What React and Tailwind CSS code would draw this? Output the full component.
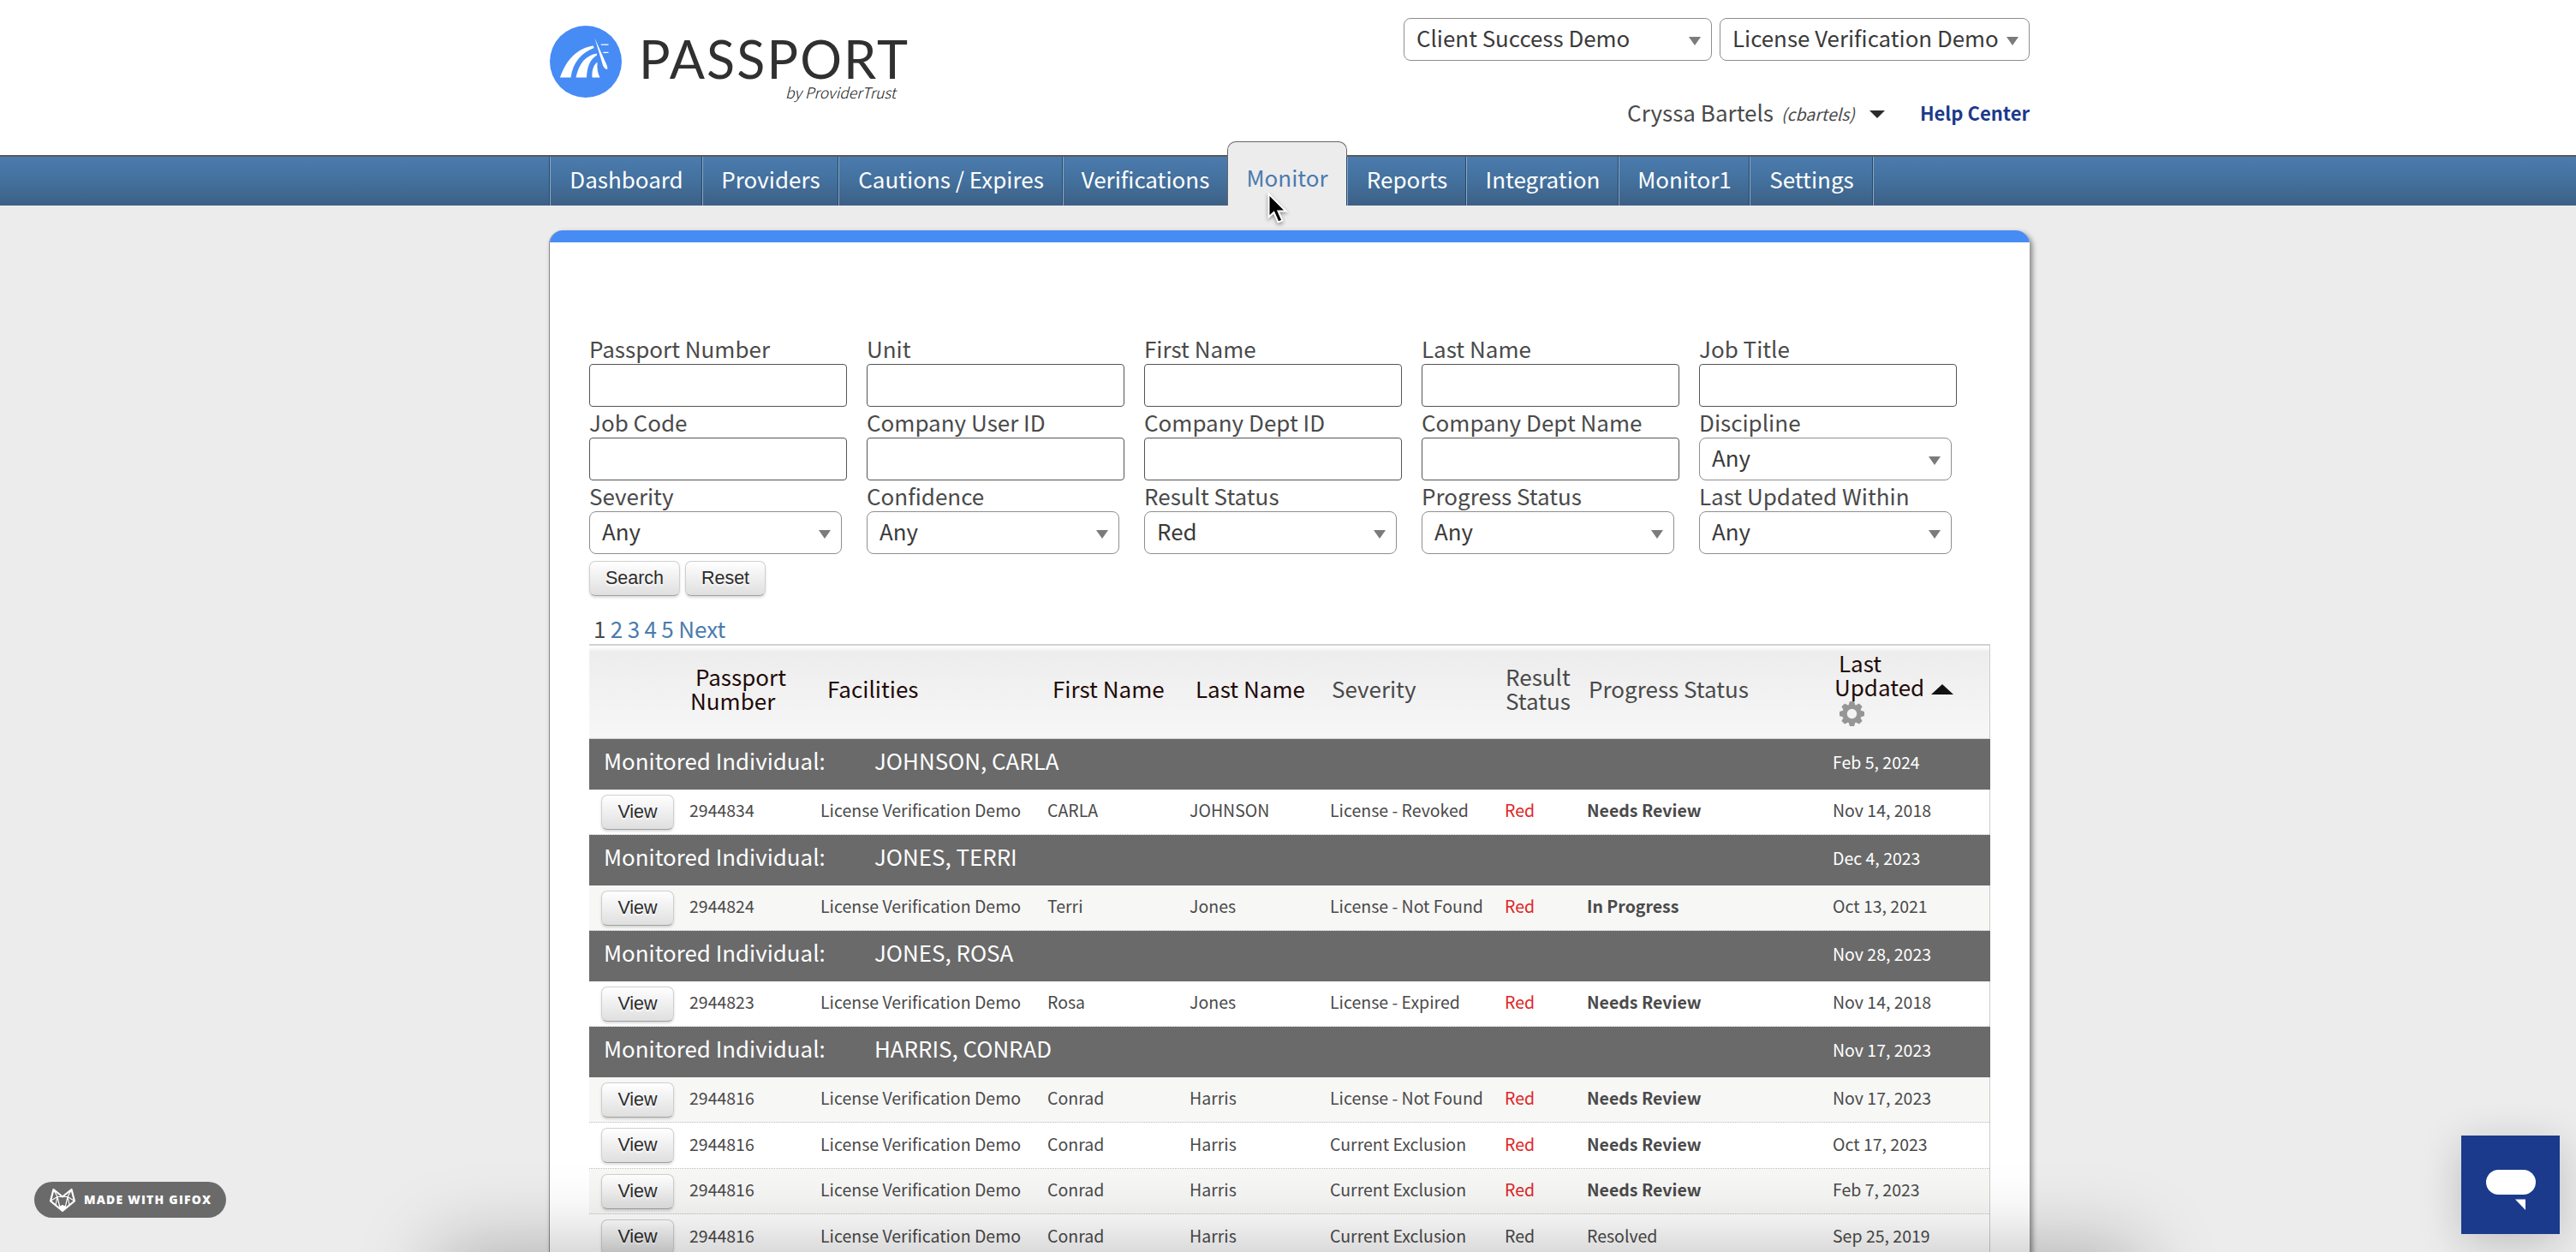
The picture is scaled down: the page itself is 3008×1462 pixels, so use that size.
const NAV = [
  { label: 'Dashboard', width: 'w-[178px]' },
  { label: 'Providers', width: 'w-[159px]' },
  { label: 'Cautions / Expires', width: 'w-[262px]' },
  { label: 'Verifications', width: 'w-[192px]' },
  { label: 'Monitor', width: 'w-[140px]', active: true },
  { label: 'Reports', width: 'w-[139px]' },
  { label: 'Integration', width: 'w-[178px]' },
  { label: 'Monitor1', width: 'w-[153px]' },
  { label: 'Settings', width: 'w-[144px]' },
]

const FILTERS = [
  { label: 'Passport Number' },
  { label: 'Unit' },
  { label: 'First Name' },
  { label: 'Last Name' },
  { label: 'Job Title' },
  { label: 'Job Code' },
  { label: 'Company User ID' },
  { label: 'Company Dept ID' },
  { label: 'Company Dept Name' },
  { label: 'Discipline', value: 'Any' },
  { label: 'Severity', value: 'Any' },
  { label: 'Confidence', value: 'Any' },
  { label: 'Result Status', value: 'Red' },
  { label: 'Progress Status', value: 'Any' },
  { label: 'Last Updated Within', value: 'Any' },
]

const GROUPS = [
  {
    name: 'JOHNSON, CARLA',
    date: 'Feb 5, 2024',
    rows: [
      { id: '2944834', first: 'CARLA', last: 'JOHNSON', severity: 'License - Revoked', result: 'Red', progress: 'Needs Review', date: 'Nov 14, 2018' },
    ],
  },
  {
    name: 'JONES, TERRI',
    date: 'Dec 4, 2023',
    rows: [
      { id: '2944824', first: 'Terri', last: 'Jones', severity: 'License - Not Found', result: 'Red', progress: 'In Progress', date: 'Oct 13, 2021', shaded: true },
    ],
  },
  {
    name: 'JONES, ROSA',
    date: 'Nov 28, 2023',
    rows: [
      { id: '2944823', first: 'Rosa', last: 'Jones', severity: 'License - Expired', result: 'Red', progress: 'Needs Review', date: 'Nov 14, 2018' },
    ],
  },
  {
    name: 'HARRIS, CONRAD',
    date: 'Nov 17, 2023',
    rows: [
      { id: '2944816', first: 'Conrad', last: 'Harris', severity: 'License - Not Found', result: 'Red', progress: 'Needs Review', date: 'Nov 17, 2023', shaded: true },
      { id: '2944816', first: 'Conrad', last: 'Harris', severity: 'Current Exclusion', result: 'Red', progress: 'Needs Review', date: 'Oct 17, 2023' },
      { id: '2944816', first: 'Conrad', last: 'Harris', severity: 'Current Exclusion', result: 'Red', progress: 'Needs Review', date: 'Feb 7, 2023', shaded: true },
      { id: '2944816', first: 'Conrad', last: 'Harris', severity: 'Current Exclusion', result: 'Red', progress: 'Resolved', date: 'Sep 25, 2019', resolved: true },
    ],
  },
]

const COLS = 'grid grid-cols-[113px_154px_264px_166px_165px_203px_97px_287px_186px]'

function Caret({ className }) {
  return (
    <svg viewBox="0 0 14 10" preserveAspectRatio="none" className={className}>
      <path d="M0 0H14L7 10Z" fill="currentColor" />
    </svg>
  )
}

function Select({ value, className }) {
  return (
    <div className={`flex h-[50px] items-center justify-between rounded-[8px] border border-[#8e8e8e] bg-white pl-[14px] pr-[12px] text-[#3a3a3a] ${className}`}>
      <span className="-mt-[5px] text-[25.9px] leading-[40px]">{value}</span>
      <Caret className="mt-[3px] h-[10px] w-[14px] text-[#7b7b7b]" />
    </div>
  )
}

function Button({ children, className }) {
  return (
    <button className={`flex h-[41px] items-center justify-center rounded-[7px] border border-[#cfcfcf] border-b-[#a0a0a0] bg-linear-to-b from-white to-[#dfdfdf] pb-px font-['Liberation_Sans',sans-serif] text-[21.5px] text-[#2c2c2c] shadow-[0_2px_3px_rgba(0,0,0,0.14)] [text-shadow:0_2px_2px_#fff] ${className}`}>
      {children}
    </button>
  )
}

function Logo() {
  return (
    <div className="flex pt-[30px]">
      <svg viewBox="0 0 84 84" className="h-[84px] w-[84px]">
        <circle cx="42" cy="42" r="42" fill="#478bf5" />
        <g fill="#fff">
          <path d="M12 60.500C19 40 32 26 51 23.500L51.500 26C38 31 27 42 24.500 60.500Z" />
          <path d="M30.500 60.500C34 44 42 34.500 55 32.500V34.500C47 39 43.500 48 43 60.500Z" />
          <path d="M49.500 60.500C49 52 51 46 55.500 42.500C55 50 56 56 58.500 60.500Z" />
          <path d="M52.500 14.500L66.500 46Q68.500 51 66 51Q63.500 50 62 46.500Z" />
          <path d="M59.500 21.500H68.500V22.800H60Z M62 30.800H68.500V32H62.500Z" />
        </g>
      </svg>
      <div className="ml-[20px] flex w-[320px] flex-col">
        <div className="mt-[9px] h-[60px] whitespace-nowrap font-['Lato',sans-serif] text-[61px] leading-[60px] tracking-[2.1px] text-[#303030]">PASSPORT</div>
        <div className="-mt-[4px] pr-[20px] text-right text-[17.5px] font-light italic leading-[26px] text-[#111]">by ProviderTrust</div>
      </div>
    </div>
  )
}

function Header() {
  return (
    <header className="flex h-[181px] items-start justify-between bg-white pl-[642px] pr-[638px]">
      <Logo />
      <div className="flex flex-col items-end pt-[21px]">
        <div className="flex gap-[9px]">
          <Select value="Client Success Demo" className="w-[360px]" />
          <Select value="License Verification Demo" className="w-[362px]" />
        </div>
        <div className="mt-[44px] flex items-baseline leading-[32px] text-[#4a4a4a]">
          <span>Cryssa Bartels</span>
          <span className="ml-[9px] -translate-y-px text-[19.5px] italic">(cbartels)</span>
          <Caret className="ml-[17px] h-[9px] w-[18px] -translate-y-1 text-[#2b2b2b]" />
          <span className="ml-[41px] -translate-y-px text-[22px] font-bold text-[#1b3a8c]">Help Center</span>
        </div>
      </div>
    </header>
  )
}

function Nav() {
  return (
    <nav className="flex h-[59px] items-end border-t-2 border-[#5a5a5a] bg-linear-to-b from-[#4b7bae] via-[#43709d] to-[#3d6085] pl-[642px] text-[26px]">
      {NAV.map(n =>
        n.active ? (
          <div key={n.label} className={`flex h-[75px] items-center justify-center rounded-t-[10px] border border-b-0 border-[#666] bg-[#ececec] pt-[6px] text-[#4a7bae] ${n.width}`}>
            {n.label}
          </div>
        ) : (
          <div key={n.label} className={`flex h-full items-center justify-center border-l border-[#8fa9c2] pb-[7px] text-white shadow-[-1px_0_0_#24486b] ${n.width}`}>
            {n.label}
          </div>
        )
      )}
      <div className="h-full border-l border-[#8fa9c2] shadow-[-1px_0_0_#24486b]" />
    </nav>
  )
}

function Filters() {
  return (
    <div className="grid grid-cols-[repeat(5,301px)] gap-x-[23px]">
      {FILTERS.map(f => (
        <div key={f.label} className="h-[86px]">
          <div className="h-8 leading-[28px]">{f.label}</div>
          {f.value ? (
            <Select value={f.value} className="w-[295px]" />
          ) : (
            <div className="h-[50px] rounded-[4px] border border-[#555] bg-white" />
          )}
        </div>
      ))}
    </div>
  )
}

function Gear() {
  return (
    <svg viewBox="-14 -14 28 28" className="h-[29px] w-[29px]">
      <g fill="#969696">
        {[0, 45, 90, 135].map(a => (
          <path key={a} d="M-4 -9L-2.500 -14H2.500L4 -9V9L2.500 14H-2.500L-4 9Z" transform={`rotate(${a})`} />
        ))}
        <circle r="10.500" />
      </g>
      <circle r="5.500" fill="#f3f3f3" />
    </svg>
  )
}

function TableHead() {
  return (
    <div className={`${COLS} h-[111px] items-center border-b border-t-2 border-[#d2d2d2] bg-linear-to-b from-[#ececec] to-[#f7f7f7] pb-[8px] leading-[28px] text-[#210a08] shadow-[inset_0_6px_4px_-2px_#fff]`}>
      <div />
      <div className="pl-[5px]"><div className="pl-[6px]">Passport</div>Number</div>
      <div className="pl-[11px]">Facilities</div>
      <div className="pl-[10px]">First Name</div>
      <div className="pl-[11px]">Last Name</div>
      <div className="pl-[5px] text-[#4a4a4a]">Severity</div>
      <div className="pl-[5px] text-[#4a4a4a]">Result<br />Status</div>
      <div className="pl-[5px] text-[#4a4a4a]">Progress Status</div>
      <div className="-mt-px pl-[5px]">
        <div className="pl-[5px]">Last</div>
        <div className="flex items-center">
          Updated
          <Caret className="ml-[8px] mt-[6px] h-[12px] w-[26px] rotate-180 text-[#111]" />
        </div>
        <div className="pl-[6px] pt-[3px]"><Gear /></div>
      </div>
    </div>
  )
}

function Row({ row }) {
  return (
    <div className={`${COLS} h-[53.5px] items-center border-b border-dotted border-[#bdbdbd] text-[19.5px] leading-[48px] ${row.shaded ? 'bg-[#f7f7f6]' : 'bg-white'}`}>
      <div className="pl-[14px] pt-px"><Button className="w-[85px]">View</Button></div>
      <div className="-mt-[3px] pl-[4px]">{row.id}</div>
      <div className="-mt-[3px] pl-[3px]">License Verification Demo</div>
      <div className="-mt-[3px] pl-[4px]">{row.first}</div>
      <div className="-mt-[3px] pl-[4px]">{row.last}</div>
      <div className="-mt-[3px] pl-[3px]">{row.severity}</div>
      <div className={`-mt-[3px] pl-[4px] ${row.resolved ? '' : 'text-[#e0251f]'}`}>{row.result}</div>
      <div className={`-mt-[3px] pl-[3px] ${row.resolved ? '' : 'font-bold'}`}>{row.progress}</div>
      <div className="-mt-[3px] pl-[3px]">{row.date}</div>
    </div>
  )
}

function ResultsTable() {
  return (
    <div className="w-[1636px] border-r border-[#ccc]">
      <TableHead />
      {GROUPS.map(g => (
        <div key={g.name}>
          <div className="-mr-px flex h-[58.500px] items-center bg-[#6a6a6a] pl-[17px] text-[25.9px] leading-[50px] text-white">
            <span className="-mt-[8px] w-[316px]">Monitored Individual:</span>
            <span className="-mt-[8px] w-[1119px]">{g.name}</span>
            <span className="-mt-[5px] text-[19.5px]">{g.date}</span>
          </div>
          {g.rows.map((r, i) => <Row key={i} row={r} />)}
        </div>
      ))}
    </div>
  )
}

function Cursor() {
  return (
    <svg viewBox="0 0 24 38" className="absolute left-[1480px] top-[224px] h-[38px] w-[24px] drop-shadow-[0_2px_2px_rgba(0,0,0,0.4)]">
      <path d="M1.500 2.500V29.500L7.500 24L12.500 35.500L17.500 33.500L12.500 22.500H21.500Z" fill="#000" stroke="#fff" strokeWidth="2" />
    </svg>
  )
}

function GifoxBadge() {
  return (
    <div className="absolute left-[40px] top-[1380px] flex h-[42px] w-[224px] items-center rounded-full bg-[#6a6a6a] pl-[17px] text-white">
      <svg viewBox="0 0 32 29" className="h-[29px] w-[32px]" fill="none" stroke="#fff" strokeLinejoin="round">
        <path d="M5.500 2L16 10.500L26.500 2L30 15.500L16 27L2 15.500Z" strokeWidth="2.200" />
        <path d="M5.500 2L10 10.500H22L26.500 2M10 10.500L8 20L2 15.500L10 10.500L13 23.500M22 10.500L24 20L30 15.500L22 10.500L19 23.500" strokeWidth="1.200" />
        <path d="M11.500 22.500L16 20.500L20.500 22.500L16 27Z" fill="#fff" />
      </svg>
      <span className="ml-[9px] whitespace-nowrap font-['Open_Sans',sans-serif] text-[14px] font-extrabold leading-none tracking-[1.2px]">MADE WITH GIFOX</span>
    </div>
  )
}

function ChatButton() {
  return (
    <div className="absolute left-[2874px] top-[1326px] h-[115px] w-[115px] bg-[#1b3a8c] shadow-[0_10px_50px_rgba(0,0,0,0.2)]">
      <svg viewBox="0 0 115 115" className="h-full w-full" fill="#fff">
        <rect x="29" y="40" width="58" height="29" rx="14.500" />
        <path d="M63 74.500H75V87Z" />
      </svg>
    </div>
  )
}

export default function App() {
  return (
    <div className="relative h-[1462px] w-[3008px] overflow-hidden bg-[#ececec] font-['Noto_Sans_CJK_SC',sans-serif] text-[26px] text-[#4a4a4a]">
      <Header />
      <Nav />
      <main className="ml-[641px] mt-[29px] h-[1300px] w-[1729px] overflow-hidden rounded-t-[16px] border-l border-[#8a8a8a] bg-white shadow-[3px_3px_6px_rgba(0,0,0,0.45)]">
        <div className="h-[14px] bg-[#478bf5]" />
        <div className="pl-[46px] pt-[110px]">
          <Filters />
          <div className="mt-[4px] flex gap-[6px]">
            <Button className="w-[106px]">Search</Button>
            <Button className="w-[94px]">Reset</Button>
          </div>
          <div className="mt-[23px] flex h-[33px] gap-[5.4px] pl-[5px] leading-[30px] text-[#4a7bae]">
            <span className="text-[#4a4a4a]">1</span>
            <span>2</span>
            <span>3</span>
            <span>4</span>
            <span>5</span>
            <span>Next</span>
          </div>
          <ResultsTable />
        </div>
      </main>
      {/* soft shadow that creeps up from below the fold */}
      <div className="absolute left-[540px] top-[1484px] h-[60px] w-[1930px] shadow-[0_0_90px_30px_rgba(0,0,0,0.25)]" />
      <Cursor />
      <GifoxBadge />
      <ChatButton />
    </div>
  )
}
